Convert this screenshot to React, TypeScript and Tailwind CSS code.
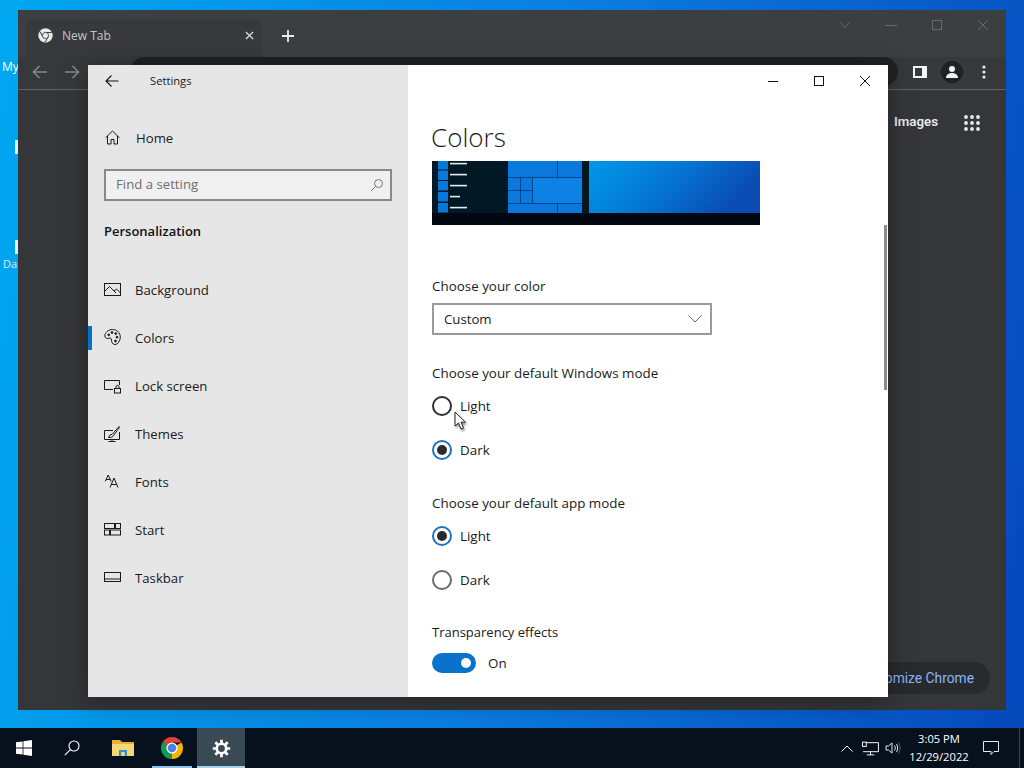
import React from "react";

const segoe = "font-['Open_Sans','Noto_Sans',sans-serif]";

type IconProps = { className?: string };

function ChromeLogo({ className }: IconProps) {
  return (
    <svg viewBox="0 0 24 24" className={className}>
      <path d="M12 12L2.47 6.5A11 11 0 0 1 21.53 6.5H12Z" fill="#db4437" />
      <path d="M12 12L2.47 6.5A11 11 0 0 0 12 23Z" fill="#0f9d58" />
      <path d="M12 12L21.53 6.5A11 11 0 0 1 12 23Z" fill="#f4b400" />
      <circle cx="12" cy="12" r="5.6" fill="#fff" />
      <circle cx="12" cy="12" r="4.3" fill="#4a7ee8" />
    </svg>
  );
}

function TabFavicon() {
  return (
    <svg viewBox="0 0 24 24" className="h-[15px] w-[15px]">
      <circle cx="12" cy="12" r="11.5" fill="#e8eaed" />
      <path d="M12 7.2H22M8 14.5L3 5.5M15.8 15L10.8 23.5" stroke="#3a3b3e" strokeWidth="1.6" fill="none" />
      <circle cx="12" cy="12" r="5" fill="#e8eaed" stroke="#3a3b3e" strokeWidth="1.4" />
    </svg>
  );
}

const navIcon = "h-[18px] w-[18px] shrink-0";
const stroke = { fill: "none", stroke: "#1a1a1a", strokeWidth: 1 };

const icons: Record<string, React.ReactNode> = {
  Background: (
    <svg viewBox="0 0 18 18" className={navIcon} {...stroke}>
      <rect x="0.5" y="2.5" width="16" height="12" />
      <path d="M0.5 10.5L5.5 5.5L12 12M10 10L12.5 8L16.5 12" />
    </svg>
  ),
  Colors: (
    <svg viewBox="0 1 18 18" className={navIcon} {...stroke}>
      <path d="M8.5 1.5C4.3 1.5 0.8 4.5 0.8 8C0.8 10.5 3.5 10.8 5 10.2C6.5 9.8 7.5 10.5 7.5 12C7.5 14 8.5 16.5 11 16.5C14 16.5 16.3 12.5 16.3 9C16.3 4.8 12.7 1.5 8.5 1.5Z" />
      <circle cx="4.7" cy="6.8" r="0.9" fill="#1a1a1a" />
      <circle cx="8" cy="4.5" r="0.9" fill="#1a1a1a" />
      <circle cx="11.8" cy="5.6" r="0.9" fill="#1a1a1a" />
      <circle cx="13.1" cy="9.2" r="0.9" fill="#1a1a1a" />
      <circle cx="11.5" cy="13" r="0.9" fill="#1a1a1a" />
    </svg>
  ),
  "Lock screen": (
    <svg viewBox="0 0 18 18" className={navIcon} {...stroke}>
      <path d="M9 12.5H0.5V3.5H15.5V8" />
      <rect x="10.5" y="11.5" width="6" height="4.5" />
      <path d="M12 11.5V9.8A1.5 1.5 0 0 1 15 9.8V11.5" />
    </svg>
  ),
  Themes: (
    <svg viewBox="0 0 18 18" className={navIcon} {...stroke}>
      <path d="M9 5.5H0.5V14.5H15.5V7M8 14.5V16.5M4.5 16.5H11.5" />
      <path d="M15 1.5L8.5 9L6 10L4.5 12.5C7 12.8 9 12 9.7 10.3L15.5 2.5Z" />
    </svg>
  ),
  Fonts: (
    <svg viewBox="0 0 18 18" className={navIcon} {...stroke}>
      <path d="M1.2 8.5L4.2 2L7.2 8.5M2.2 6.5H6.2" />
      <path d="M6 14.5L10 5L14 14.5M7.2 11.5H12.8" />
    </svg>
  ),
  Start: (
    <svg viewBox="0 0 18 18" className={navIcon} {...stroke}>
      <rect x="0.5" y="2.5" width="10" height="5" />
      <rect x="11.5" y="2.5" width="5" height="5" />
      <rect x="0.5" y="9" width="5" height="5" />
      <rect x="6.5" y="9" width="10" height="5" />
    </svg>
  ),
  Taskbar: (
    <svg viewBox="0 0 18 18" className={navIcon} {...stroke}>
      <rect x="0.5" y="3.5" width="16" height="9" />
      <path d="M0.5 10H16.5" />
    </svg>
  ),
};

const navItems = ["Background", "Colors", "Lock screen", "Themes", "Fonts", "Start", "Taskbar"];

function Radio({ label, checked, muted }: { label: string; checked?: boolean; muted?: boolean }) {
  return (
    <div className="flex h-[44px] items-center">
      <div
        className={`flex h-5 w-5 shrink-0 items-center justify-center rounded-full border-2 ${
          checked ? "border-[#1a72c0]" : muted ? "border-[#6b6b6b]" : "border-[#2e2e2e]"
        }`}
      >
        {checked && <div className="h-[10px] w-[10px] rounded-full bg-[#2b2b2b]" />}
      </div>
      <span className="ml-2 text-[13.4px] text-[#1a1a1a]">{label}</span>
    </div>
  );
}

function PreviewPicture() {
  const leftTiles = [161, 170.5, 181, 192, 203];
  const lines = [
    [163.5, 467],
    [174.5, 467],
    [185.5, 467],
    [196.5, 460],
    [207.5, 467],
  ];
  return (
    <svg viewBox="432 161 328 64" className="block h-16 w-[328px]">
      <defs>
        <linearGradient id="desk" x1="0" y1="0" x2="1" y2="0.3">
          <stop offset="0" stopColor="#0098e8" />
          <stop offset="0.5" stopColor="#0578d4" />
          <stop offset="1" stopColor="#0a4cb4" />
        </linearGradient>
      </defs>
      <rect x="432" y="161" width="328" height="64" fill="#020812" />
      <rect x="432" y="161" width="76" height="52" fill="#021824" />
      {leftTiles.map((y, i) => (
        <rect key={i} x="438" y={y} width="10" height={i === 0 ? 8.5 : 9.5} fill="#0a78d8" />
      ))}
      {lines.map(([y, x2]) => (
        <rect key={y} x="450" y={y - 0.7} width={x2 - 450} height="1.6" fill="#e4ecf0" />
      ))}
      <rect x="508" y="161" width="74" height="52" fill="#0a78dc" />
      <rect x="533" y="178" width="49" height="25" fill="#0c82e4" />
      <path d="M508 177.5H582M508 203.5H582M557.5 161V177.5M557.5 203.5V213M532.5 177.5V203.5M520.5 177.5V203.5M508 190.5H532.5" stroke="#053a70" strokeWidth="0.8" fill="none" />
      <rect x="582" y="161" width="7" height="52" fill="#021824" />
      <rect x="589" y="161" width="171" height="52" fill="url(#desk)" />
    </svg>
  );
}

function SettingsWindow() {
  return (
    <div className={`absolute left-[88px] top-[65px] flex h-[632px] w-[800px] bg-white shadow-[0_4px_24px_rgba(0,0,0,0.35)] ${segoe}`}>
      <aside className="flex w-[320px] shrink-0 flex-col bg-[#e6e6e6] text-[#1a1a1a]">
        <div className="flex h-8 items-center pl-[16px]">
          <svg viewBox="0 0 16 16" className="h-4 w-4" fill="none" stroke="#111" strokeWidth="1.1">
            <path d="M14.5 8H2M7.5 2.5L2 8L7.5 13.5" />
          </svg>
          <span className="ml-[30px] pt-px text-[11.2px]">Settings</span>
        </div>
        <div className="mt-[17px] flex h-12 items-center pl-4">
          <svg viewBox="0 0 18 18" className={navIcon} {...stroke}>
            <path d="M1.5 8.8L8.5 2L15.5 8.8M3.5 7V15H7V10.5H10V15H13.5V7" />
          </svg>
          <span className="ml-[14px] pt-px text-[13.2px]">Home</span>
        </div>
        <div className="ml-4 mt-[7px] flex h-8 w-[288px] items-center justify-between border-2 border-[#8a8a8a] bg-[#f0f0f0] pl-[10px] pr-[6px]">
          <span className="text-[13.2px] text-[#6e6e6e]">Find a setting</span>
          <svg viewBox="0 0 14 14" className="h-[14px] w-[14px]" fill="none" stroke="#777" strokeWidth="1">
            <circle cx="8.5" cy="5.5" r="4" />
            <path d="M5.5 8.5L1 13" />
          </svg>
        </div>
        <div className="flex h-[60px] items-center pl-4 pt-[2px] text-[13px] font-semibold text-[#111]">Personalization</div>
        <nav className="mt-[5px] flex flex-col">
          {navItems.map((item) => (
            <div key={item} className="relative flex h-12 items-center pl-4">
              {item === "Colors" && <div className="absolute bottom-[12px] left-0 top-[12px] w-1 bg-[#0b6fc8]" />}
              {icons[item]}
              <span className="ml-[13px] pt-[2px] text-[13.2px]">{item}</span>
            </div>
          ))}
        </nav>
      </aside>
      <main className="relative flex-1 pl-6 text-[#1a1a1a]">
        <div className="-ml-6 flex h-8 justify-end">
          <div className="flex h-8 w-[46px] items-center justify-center">
            <div className="h-px w-[10px] bg-[#111]" />
          </div>
          <div className="flex h-8 w-[46px] items-center justify-center">
            <div className="h-[10px] w-[10px] border border-[#111]" />
          </div>
          <div className="flex h-8 w-[46px] items-center justify-center">
            <svg viewBox="0 0 12 12" className="h-3 w-3" stroke="#111" strokeWidth="1">
              <path d="M1 1L11 11M11 1L1 11" />
            </svg>
          </div>
        </div>
        <h1 className="-ml-px mt-4 flex h-12 items-center text-[26px] font-light">Colors</h1>
        <PreviewPicture />
        <div className="mt-[51px] flex h-5 items-center text-[13.4px]">Choose your color</div>
        <div className="mt-[7px] flex h-8 w-[280px] items-center justify-between border-2 border-[#9a9a9a] bg-white pl-[10px] pr-[8px]">
          <span className="pt-[2px] text-[13.2px]">Custom</span>
          <svg viewBox="0 0 14 8" className="h-2 w-[14px]" fill="none" stroke="#666" strokeWidth="1">
            <path d="M0.5 0.5L7 7L13.5 0.5" />
          </svg>
        </div>
        <div className="mt-[28px] flex h-5 items-center text-[13.4px]">Choose your default Windows mode</div>
        <div className="mt-px">
          <Radio label="Light" />
          <Radio label="Dark" checked />
        </div>
        <div className="mt-[21px] flex h-5 items-center text-[13.4px]">Choose your default app mode</div>
        <div className="mt-px">
          <Radio label="Light" checked />
          <Radio label="Dark" muted />
        </div>
        <div className="mt-[21px] flex h-5 items-center text-[13px]">Transparency effects</div>
        <div className="mt-[10px] flex h-5 items-center">
          <div className="flex h-5 w-11 items-center justify-end rounded-full bg-[#0b72cc] pr-[5px]">
            <div className="h-[10px] w-[10px] rounded-full bg-white" />
          </div>
          <span className="ml-3 text-[13.4px]">On</span>
        </div>
        <div className="absolute left-[476px] top-[160px] h-[165px] w-[3px] bg-[#8c8c8c]" />
      </main>
    </div>
  );
}

function ChromeWindow() {
  return (
    <div className="absolute left-[18px] top-[10px] flex h-[700px] w-[988px] flex-col bg-[#35363a] font-['Roboto',sans-serif]">
      <div className="flex h-[47px] items-end bg-[#3c3f41]">
        <div className="ml-[9px] flex h-[37px] w-[234px] items-center rounded-t-lg bg-[#38393c] pb-[6px] pl-[11px] pr-[5px]">
          <TabFavicon />
          <span className="ml-[9px] flex-1 font-['Open_Sans',sans-serif] text-[12px] text-[#c3c5c8]">New Tab</span>
          <svg viewBox="0 0 10 10" className="mr-[2px] h-[9px] w-[9px]" stroke="#d5d7da" strokeWidth="1.5">
            <path d="M1 1L9 9M9 1L1 9" />
          </svg>
        </div>
        <div className="ml-[20px] flex h-[37px] items-center pb-[6px]">
          <svg viewBox="0 0 14 14" className="h-[14px] w-[14px]" stroke="#e8eaed" strokeWidth="1.8">
            <path d="M7 1V13M1 7H13" />
          </svg>
        </div>
        <div className="ml-auto flex h-[30px] self-start pt-[7px]">
          <div className="flex h-4 w-[46px] items-center justify-center">
            <svg viewBox="0 0 10 6" className="h-[6px] w-[10px]" fill="none" stroke="#66696c">
              <path d="M0.5 0.5L5 5.5L9.5 0.5" />
            </svg>
          </div>
          <div className="flex h-4 w-[46px] items-center justify-center">
            <div className="h-px w-3 bg-[#66696c]" />
          </div>
          <div className="flex h-4 w-[46px] items-center justify-center">
            <div className="h-[10px] w-[10px] border border-[#66696c]" />
          </div>
          <div className="flex h-4 w-[46px] items-center justify-center">
            <svg viewBox="0 0 12 12" className="h-3 w-3" stroke="#66696c">
              <path d="M1 1L11 11M11 1L1 11" />
            </svg>
          </div>
        </div>
      </div>
      <div className="flex h-[33px] items-center border-b border-[#5f6368] bg-[#37383b] pb-[3px]">
        <div className="flex w-[112px] items-center pl-[14px]">
          <svg viewBox="0 0 16 16" className="h-4 w-4" fill="none" stroke="#85878a" strokeWidth="1.6">
            <path d="M15 8H1.5M7.5 2L1.5 8L7.5 14" />
          </svg>
          <svg viewBox="0 0 16 16" className="ml-4 h-4 w-4" fill="none" stroke="#85878a" strokeWidth="1.6">
            <path d="M1 8H14.5M8.5 2L14.5 8L8.5 14" />
          </svg>
        </div>
        <div className="h-[29px] flex-1 rounded-full bg-[#202124]" />
        <div className="flex w-[108px] items-center pl-[15px]">
          <svg viewBox="0 0 14 14" className="h-[14px] w-[14px]">
            <path fillRule="evenodd" d="M0 1H14V13H0ZM2 3V11H9V3Z" fill="#f1f3f4" />
          </svg>
          <div className="ml-[14px] flex h-[22px] w-[22px] items-center justify-center rounded-full bg-[#202124]">
            <svg viewBox="0 0 14 14" className="h-[14px] w-[14px]" fill="#f1f3f4">
              <circle cx="7" cy="4" r="3" />
              <path d="M1 13C1 9.5 4 8 7 8C10 8 13 9.5 13 13Z" />
            </svg>
          </div>
          <svg viewBox="0 0 4 14" className="ml-[19px] h-[14px] w-1" fill="#e8eaed">
            <circle cx="2" cy="2" r="1.6" />
            <circle cx="2" cy="7" r="1.6" />
            <circle cx="2" cy="12" r="1.6" />
          </svg>
        </div>
      </div>
      <div className="flex flex-1 flex-col">
        <div className="flex items-center justify-end pr-[26px] pt-[22px]">
          <span className="pb-[2px] text-[13.3px] font-semibold text-[#e8eaed]">Images</span>
          <svg viewBox="0 0 16 16" className="ml-[26px] h-4 w-4" fill="#e8eaed">
            {[2, 8, 14].flatMap((y) =>
              [2, 8, 14].map((x) => <circle key={`${x}-${y}`} cx={x} cy={y} r="1.9" />)
            )}
          </svg>
        </div>
        <div className="mb-[16px] mr-[16px] mt-auto flex h-8 items-center self-end rounded-full bg-[#292a2d] pl-4 pr-4 text-[13.8px] text-[#8ab4f8]">
          Customize Chrome
        </div>
      </div>
    </div>
  );
}

function Taskbar() {
  return (
    <footer className={`flex h-10 shrink-0 items-stretch bg-[#06111d] text-white ${segoe}`}>
      <div className="flex w-12 items-center justify-center">
        <svg viewBox="0 0 16 16" className="h-4 w-4" fill="#fff">
          <path d="M0 2.3L6.6 1.4V7.6H0ZM7.4 1.3L16 0V7.6H7.4ZM0 8.4H6.6V14.6L0 13.7ZM7.4 8.4H16V16L7.4 14.7Z" />
        </svg>
      </div>
      <div className="flex w-12 items-center justify-center">
        <svg viewBox="0 0 16 16" className="h-4 w-4" fill="none" stroke="#fff" strokeWidth="1.1">
          <circle cx="10" cy="6" r="5" />
          <path d="M6.4 9.6L0.8 15.2" />
        </svg>
      </div>
      <div className="flex w-[54px] items-center justify-center">
        <svg viewBox="0 0 22 18" className="h-[18px] w-[22px]">
          <path d="M0 1H8L10 3H22V17H0Z" fill="#e2b33c" />
          <path d="M0 5H22V17H0Z" fill="#f7d774" />
          <path d="M7 17V11H15V17H12.8V13H9.2V17Z" fill="#2f8fd0" />
        </svg>
      </div>
      <div className="relative flex w-[44px] items-center justify-center">
        <ChromeLogo className="h-6 w-6" />
        <div className="absolute bottom-0 left-[2px] right-[2px] h-[2px] bg-[#8fc4e6]" />
      </div>
      <div className="relative ml-[3px] flex w-12 items-center justify-center bg-[#3a4a55]">
        <svg viewBox="0 0 24 24" className="h-[19px] w-[19px]" fill="none" stroke="#fff" strokeWidth="3.4">
          <circle cx="12" cy="12" r="6" />
          <path d="M12 1V5M12 19V23M1 12H5M19 12H23M4.2 4.2L7 7M17 17L19.8 19.8M19.8 4.2L17 7M7 17L4.2 19.8" />
        </svg>
        <div className="absolute bottom-0 left-0 right-0 h-[2px] bg-[#a5d3ee]" />
      </div>
      <div className="flex flex-1 items-center justify-end">
        <svg viewBox="0 0 12 7" className="h-[7px] w-3" fill="none" stroke="#fff">
          <path d="M0.5 6.5L6 1L11.5 6.5" />
        </svg>
        <svg viewBox="0 0 16 14" className="ml-[9px] h-[15px] w-[17px]" fill="none" stroke="#fff" strokeWidth="0.9">
          <path d="M4 1.5H15.5V10H1M8 10V13M4.5 13H11.5" />
          <rect x="0.5" y="1" width="3.5" height="4" />
        </svg>
        <svg viewBox="0 0 16 14" className="ml-[6px] h-[14px] w-4" fill="none" stroke="#fff" strokeWidth="0.9">
          <path d="M1 5H3.5L7 2V12L3.5 9H1Z" />
          <path d="M9.5 4.5C10.5 6 10.5 8 9.5 9.5M11.5 3C13 5.5 13 8.5 11.5 11" />
          <path d="M13.5 1.5C15.5 5 15.5 9 13.5 12.5" stroke="#667" />
        </svg>
        <div className="ml-[3px] flex w-[70px] flex-col items-center text-[11.2px] leading-[18px]">
          <span>3:05 PM</span>
          <span>12/29/2022</span>
        </div>
        <svg viewBox="0 0 16 14" className="ml-[9px] h-[14px] w-4" fill="none" stroke="#fff" strokeWidth="0.9">
          <path d="M0.5 0.5H15.5V10.5H11L8 13.5V10.5H0.5Z" />
        </svg>
        <div className="ml-[20px] h-full w-[5px] border-l border-[#3a4650]" />
      </div>
    </footer>
  );
}

export default function App() {
  return (
    <div className="flex h-[768px] w-[1024px] flex-col overflow-hidden">
      <div className="relative flex-1 bg-[linear-gradient(100deg,#00a8f0_0%,#0a7ee0_50%,#0648bc_100%)]">
        <div className={`absolute left-[2px] top-[58px] text-[12px] text-white ${segoe}`}>My</div>
        <div className="absolute left-[15px] top-[140px] h-[14px] w-[3px] bg-[#dff2fc]" />
        <div className="absolute left-[15px] top-[240px] h-[14px] w-[3px] bg-[#dff2fc]" />
        <div className={`absolute left-[3px] top-[256px] text-[11px] text-[#d8eefb] ${segoe}`}>Da</div>
        <ChromeWindow />
        <SettingsWindow />
        <svg viewBox="0 0 14 20" className="absolute left-[454px] top-[411px] h-5 w-[14px] drop-shadow-[1px_2px_1px_rgba(0,0,0,0.4)]">
          <path d="M1 1V15L4.5 12L7 18L9.5 17L7 11.2H11.5Z" fill="#fff" stroke="#222" strokeWidth="1" />
        </svg>
      </div>
      <Taskbar />
    </div>
  );
}
